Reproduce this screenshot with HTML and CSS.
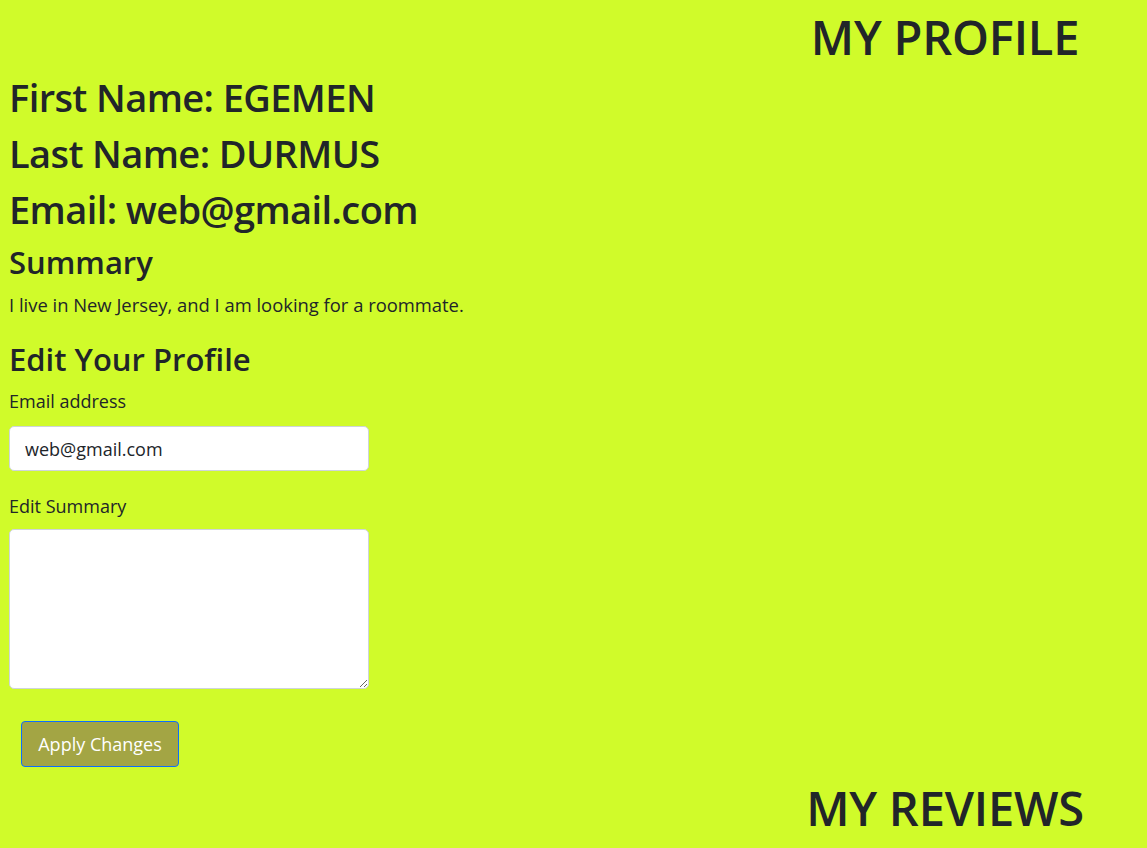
FILE: index.html
```html
<!DOCTYPE html>
<html>
<head>
<meta charset="utf-8">
<link rel="stylesheet" href="styles.css">
</head>
<body>
<div class="page">
  <h1 class="section-title">MY PROFILE</h1>
  <h1 class="info">First Name: EGEMEN</h1>
  <h1 class="info">Last Name: DURMUS</h1>
  <h1 class="info">Email: web@gmail.com</h1>
  <h2 class="sub">Summary</h2>
  <p class="summary">I live in New Jersey, and I am looking for a roommate.</p>
  <h2 class="sub edit">Edit Your Profile</h2>
  <form class="form">
    <div class="field">
      <label class="label" for="email">Email address</label>
      <input class="control" id="email" type="email" value="web@gmail.com">
    </div>
    <div class="field">
      <label class="label label-summary" for="summary">Edit Summary</label>
      <textarea class="control area" id="summary"></textarea>
    </div>
    <button type="button" class="btn">Apply Changes</button>
  </form>
  <h1 class="section-title reviews">MY REVIEWS</h1>
</div>
</body>
</html>
```

FILE: styles.css
```css
html, body {
  margin: 0;
  padding: 0;
  background: #d0fb2a;
}
body {
  font-family: "Open Sans", "Noto Sans", sans-serif;
  color: #212529;
  font-size: 18px;
  line-height: 1.5;
}
.page {
  display: flex;
  flex-direction: column;
  padding: 0 0 0 9px;
}
h1, h2, p {
  margin: 0;
}
.section-title {
  font-size: 47px;
  font-weight: 600;
  line-height: 56px;
  letter-spacing: -0.2px;
  align-self: flex-end;
  width: 404px;
  text-align: center;
  margin-top: 9px;
}
.reviews {
  margin-top: 13px;
}
.info {
  font-size: 38px;
  font-weight: 600;
  line-height: 48px;
  letter-spacing: -0.6px;
  margin-top: 8px;
}
.sub {
  font-size: 31px;
  font-weight: 600;
  line-height: 38px;
  margin-top: 10px;
}
.summary {
  margin-top: 10px;
  font-size: 18.4px;
  line-height: 27px;
}
.edit {
  margin-top: 22px;
}
.form {
  display: flex;
  flex-direction: column;
  align-items: flex-start;
}
.field {
  display: flex;
  flex-direction: column;
  width: 360px;
}
.label {
  margin-top: 10px;
  margin-bottom: 11px;
  font-size: 18px;
  line-height: 27px;
}
.label-summary {
  margin-top: 22px;
  margin-bottom: 9px;
}
.control {
  box-sizing: border-box;
  width: 360px;
  height: 45px;
  border: 1px solid #ced4da;
  border-radius: 5px;
  background: #fff;
  padding: 0 15px;
  font-family: inherit;
  font-size: 18px;
  color: #212529;
  outline: none;
}
.area {
  height: 160px;
  padding: 6px 12px;
  resize: vertical;
}
.btn {
  margin: 32px 0 0 12px;
  box-sizing: border-box;
  width: 158px;
  height: 46px;
  background: #a3a544;
  color: #fff;
  border: 1px solid #0d6efd;
  border-radius: 4px;
  font-family: inherit;
  font-size: 18px;
  padding: 0;
}
```
